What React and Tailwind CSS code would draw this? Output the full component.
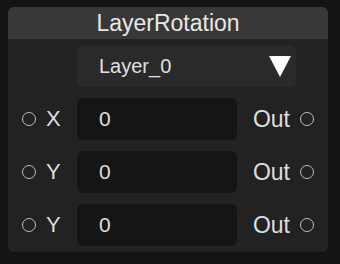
import React from "react";

function Port() {
  return (
    <div className="w-[14px] h-[14px] rounded-full border-[1.75px] border-[#bdbdbd] shrink-0" />
  );
}

function Row({ label }) {
  return (
    <div className="flex items-center h-[42px]">
      <div className="w-[69px] flex items-center pl-[14px]">
        <Port />
        <span className="ml-[10px] text-[22px] text-[#dedede] leading-none">{label}</span>
      </div>
      <div className="w-[160px] h-[42px] bg-[#151515] rounded-[6px] flex items-center pl-[22px] text-[21px] text-[#dedede]">
        0
      </div>
      <div className="flex-1 flex items-center justify-end pr-[14px]">
        <span className="text-[23px] text-[#dedede] leading-none">Out</span>
        <div className="ml-[10px]">
          <Port />
        </div>
      </div>
    </div>
  );
}

export default function App() {
  return (
    <div
      className="w-[340px] h-[264px] bg-[#141414] pt-[7px] pl-[8px]"
      style={{ fontFamily: '"Liberation Sans", Arial, sans-serif' }}
    >
      <div className="w-[320px] h-[245px] bg-[#222222] rounded-[6px] overflow-hidden flex flex-col">
        <div className="h-[32px] bg-[#383838] flex items-center justify-center text-[23px] text-[#e8e8e8] leading-none">
          LayerRotation
        </div>
        <div className="flex flex-col pt-[6px]">
          <div className="ml-[69px] w-[219px] h-[42px] bg-[#2a2a2a] rounded-[6px] flex items-center justify-between pl-[22px] pr-[5px]">
            <span className="text-[20px] text-[#e0e0e0]">Layer_0</span>
            <svg width="22" height="21" viewBox="0 0 22 21">
              <polygon points="0,0 22,0 11,21" fill="#ffffff" />
            </svg>
          </div>
          <div className="flex flex-col gap-[11px] mt-[11px]">
            <Row label="X" />
            <Row label="Y" />
            <Row label="Y" />
          </div>
        </div>
      </div>
    </div>
  );
}
